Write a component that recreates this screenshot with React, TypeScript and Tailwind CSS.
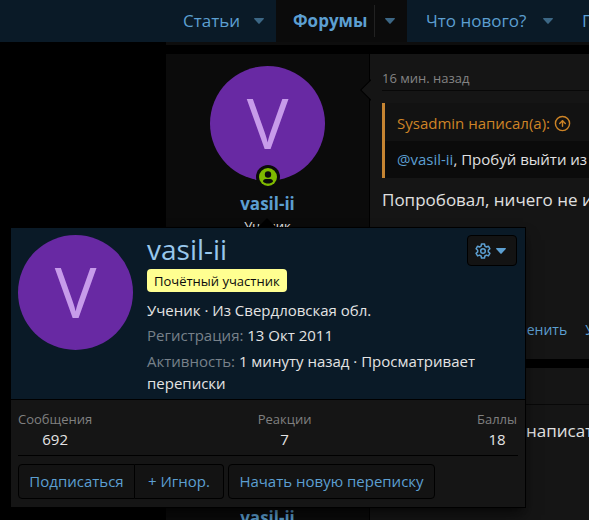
import type { ReactNode } from "react";
import { CircleArrowUp } from "lucide-react";

function Caret({ className = "" }: { className?: string }) {
  return (
    <svg viewBox="0 0 10 6" className={`w-[10px] h-[6px] shrink-0 ${className}`} fill="currentColor" aria-hidden="true">
      <path d="M.6 0h8.8c.5 0 .7.5.4.9L5.6 5.600c-.3.4-.9.4-1.2 0L.2.900C-.1.500.1 0 .6 0z" />
    </svg>
  );
}

function Cog() {
  return (
    <svg viewBox="0 0 16 16" className="w-4 h-4 shrink-0" fill="none" stroke="currentColor" strokeWidth="1.500" strokeLinejoin="round" aria-hidden="true">
      <path d="M6.500 1h3l.4 2.100 1.500.9 2-.8 1.500 2.600-1.600 1.400v1.700l1.600 1.400-1.500 2.600-2-.8-1.500.9-.4 2h-3l-.4-2-1.500-.9-2 .8-1.500-2.600 1.600-1.400v-1.700L1.100 5.800l1.500-2.600 2 .8 1.500-.9z" />
      <circle cx="8" cy="8" r="2.300" />
    </svg>
  );
}

function Avatar() {
  return (
    <div className="w-[115px] h-[115px] shrink-0 rounded-full bg-[#6829a3] text-[#c79bea] flex items-center justify-center text-[70px] leading-none pb-1">
      <span>V</span>
    </div>
  );
}

function OnlineBadge() {
  return (
    <svg viewBox="0 0 24 24" className="absolute -bottom-[8px] left-1/2 -translate-x-1/2 w-6 h-6" aria-hidden="true">
      <circle cx="12" cy="12" r="12" fill="#0b0b0b" />
      <circle cx="12" cy="12" r="9" fill="#7fb900" />
      <circle cx="12" cy="9.500" r="3.200" fill="#0b0b0b" />
      <path d="M7 16.500c0-1.600 1.200-2.500 2.800-2.500h4.400c1.600 0 2.800.9 2.800 2.500-1.200 1.400-3 2-5 2s-3.800-.6-5-2z" fill="#0b0b0b" />
    </svg>
  );
}

function Post({ title, date, children }: { title?: string; date?: string; children: ReactNode }) {
  return (
    <article className="flex bg-[#151515]">
      <div className="w-[204px] shrink-0 bg-[#0b0b0b] border-r border-black pt-3 flex flex-col items-center">
        <div className="relative">
          <Avatar />
          <OnlineBadge />
        </div>
        <a href="#" className="mt-[11px] text-[17px] leading-6 font-bold text-[#5c9fd1]">
          vasil-ii
        </a>
        <span className="text-[13px] leading-5 text-[#e0e0e0]">{title}</span>
      </div>
      <div className="relative flex-1 min-w-0 pl-3 flex flex-col">
        <svg viewBox="0 0 11 22" className="absolute -left-[10px] top-[25px] w-[11px] h-[22px]" aria-hidden="true">
          <path d="M11 0L0 11l11 11z" fill="#000" />
          <path d="M11 1.500L1.500 11l9.500 9.500z" fill="#151515" />
        </svg>
        <div className="h-[37px] pt-[13px] border-b border-[#080808] text-[13px] leading-[22px] text-[#848484]">{date}</div>
        {children}
      </div>
    </article>
  );
}

function Stat({ label, value }: { label: string; value: string }) {
  return (
    <dl className="text-center">
      <dt className="text-[13px] leading-5 text-[#808080]">{label}</dt>
      <dd className="text-[15px] leading-5 text-[#e4e4e4]">{value}</dd>
    </dl>
  );
}

const button = "h-[35px] border border-black bg-[#131313] text-[#5c9fd1] text-[15px]";

function MemberCard() {
  return (
    <section className="absolute left-[10px] top-[227px] w-[516px] border border-black bg-[#151515] shadow-lg shadow-black/50">
      <svg viewBox="0 0 20 10" className="absolute left-[246px] -top-[10px] w-5 h-[10px]" aria-hidden="true">
        <path d="M0 10L10 0l10 10z" fill="#000" />
      </svg>
      <div className="flex gap-[14px] pt-[7px] px-[7px] h-[172px] bg-[#0a1a27] border-b border-black">
        <Avatar />
        <div className="flex-1 min-w-0 text-[15px] leading-[22px] text-[#e4e4e4]">
          <h4 className="text-[28px] leading-7 text-[#98c7ec]">vasil-ii</h4>
          <div className="mt-[6px] w-fit rounded-sm bg-[#ffff91] px-[7px] text-[13px] h-[23px] text-[#0b0b0b]">
            <p className="leading-[25px]">Почётный участник</p>
          </div>
          <p className="mt-[7px]">Ученик · Из Свердловская обл.</p>
          <p className="mt-[3px]">
            <span className="text-[#77818a]">Регистрация:</span> 13 Окт 2011
          </p>
          <p className="mt-1 max-w-[345px]">
            <span className="text-[#77818a]">Активность:</span> 1 минуту назад · Просматривает переписки
          </p>
        </div>
        <button
          aria-label="Настройки"
          className="absolute right-[8px] top-[7px] w-[50px] h-[31px] rounded border border-black bg-[#131313] text-[#5c9fd1] flex items-center gap-[5px] pl-[7px]"
        >
          <Cog />
          <Caret />
        </button>
      </div>
      <div className="px-[7px] pb-2">
        <div className="flex justify-between h-[56px] pt-[9px] border-b border-black pr-[1px]">
          <Stat label="Сообщения" value="692" />
          <Stat label="Реакции" value="7" />
          <Stat label="Баллы" value="18" />
        </div>
        <div className="flex mt-2">
          <button className={`${button} w-[117px] rounded-l`}>Подписаться</button>
          <button className={`${button} w-[89px] rounded-r border-l-0`}>+ Игнор.</button>
          <button className={`${button} w-[207px] rounded ml-1`}>Начать новую переписку</button>
        </div>
      </div>
    </section>
  );
}

export default function App() {
  return (
    <div className="relative h-screen overflow-hidden bg-black whitespace-nowrap font-['Open_Sans','Noto_Sans',sans-serif]">
      <nav className="h-[42px] bg-[#0a1a27] pl-[183px] flex items-center text-[17px] text-[#5c9fd1]">
        <a href="#" className="w-[71px] shrink-0">
          Статьи
        </a>
        <Caret className="text-[#3c6785] mr-3" />
        <div className="h-full w-[131px] shrink-0 bg-[#0b0b0b] flex items-center">
          <a href="#" className="w-[98px] shrink-0 pl-[17px] font-bold">
            Форумы
          </a>
          <span className="h-8 border-l border-[#222]" />
          <Caret className="text-[#3c6785] ml-[10px]" />
        </div>
        <a href="#" className="w-[136px] shrink-0 pl-[19px]">
          Что нового?
        </a>
        <Caret className="text-[#3c6785]" />
        <a href="#" className="ml-[29px]">
          П
        </a>
      </nav>
      <main className="pl-[166px]">
        <div className="h-[3px] bg-[#0d0d0d]" />
        <div className="mt-[9px] space-y-[9px]">
          <Post title="Ученик" date="16 мин. назад">
            <blockquote className="mt-3 border-l-3 border-[#c58432] bg-[#0b0b0b]">
              <div className="h-[38px] pl-3 pt-[2px] flex items-center gap-1 bg-[#121212] text-[15px] text-[#ce8426]">
                <a href="#">Sysadmin написал(а):</a>
                <CircleArrowUp size={17} />
              </div>
              <p className="h-[37px] pl-3 text-[15px] leading-[37px] text-[#e0e0e0]">
                <a href="#" className="text-[#5c9fd1]">
                  @vasil-ii
                </a>
                , Пробуй выйти из
              </p>
            </blockquote>
            <p className="mt-2 text-[17px] leading-7 text-[#e0e0e0]">Попробовал, ничего не и</p>
            <div className="mt-[105px] h-[40px] pl-[117px] flex gap-[18px] text-[14px] leading-[22px] text-[#5c9fd1]">
              <a href="#">Изменить</a>
              <a href="#">У</a>
            </div>
          </Post>
          <Post>
            <p className="mt-3 pl-[144px] text-[17px] leading-7 text-[#e0e0e0]">написат</p>
          </Post>
        </div>
      </main>
      <div className="whitespace-normal">
        <MemberCard />
      </div>
    </div>
  );
}
